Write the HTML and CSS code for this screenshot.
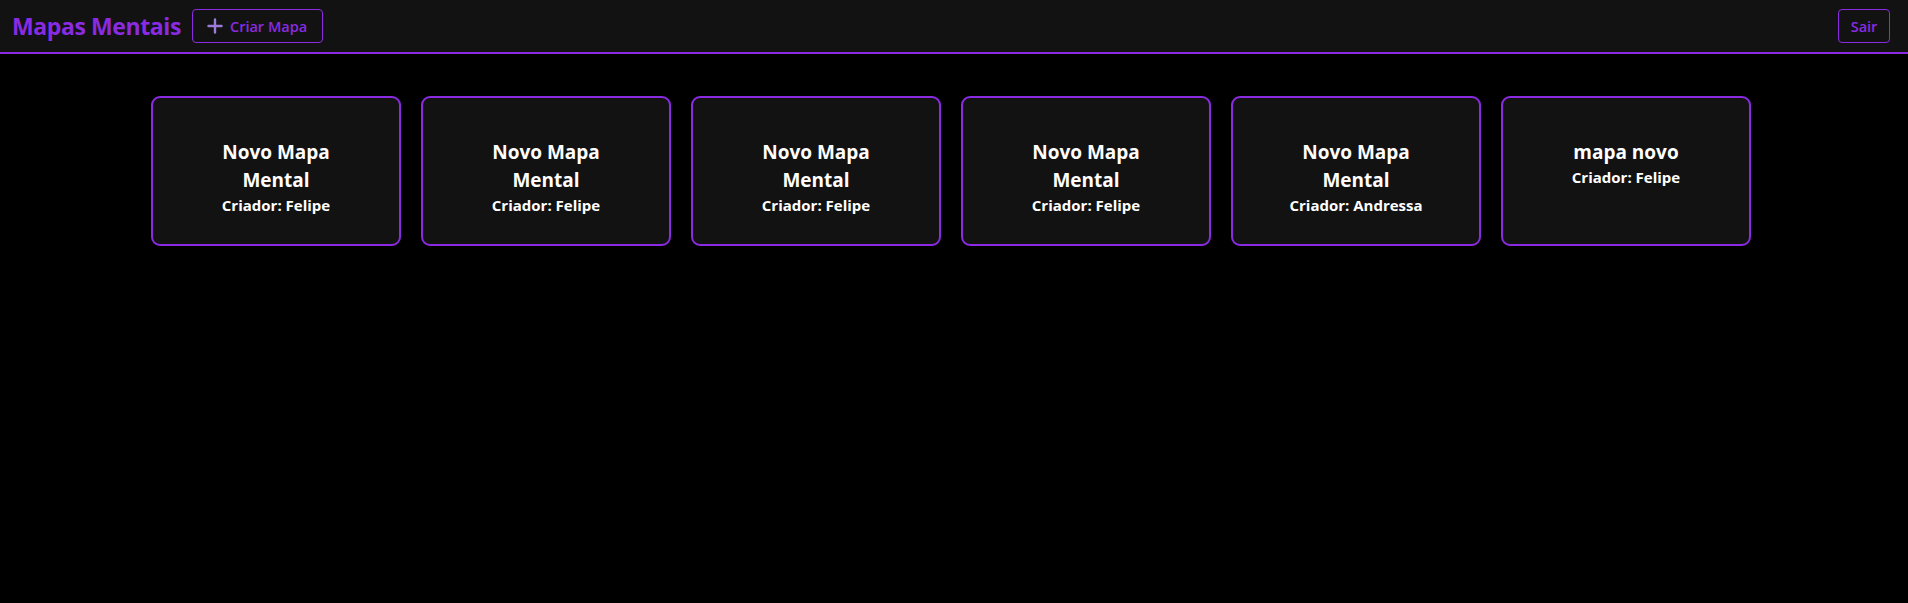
FILE: index.html
```html
<!DOCTYPE html>
<html lang="pt-BR">
<head>
<meta charset="utf-8">
<title>Mapas Mentais</title>
<link rel="stylesheet" href="styles.css">
</head>
<body>
<header class="topbar">
  <div class="topbar-left">
    <h1 class="brand">Mapas Mentais</h1>
    <button class="btn btn-create">
      <svg class="plus" viewBox="0 0 16 16" width="16" height="16" aria-hidden="true"><path d="M8 1.5v13M1.5 8h13" stroke="currentColor" stroke-width="2.4" stroke-linecap="round"/></svg>
      <span>Criar Mapa</span>
    </button>
  </div>
  <button class="btn btn-logout">Sair</button>
</header>
<main class="maps">
  <div class="card"><h3 class="card-title">Novo Mapa Mental</h3><p class="card-owner">Criador: Felipe</p></div>
  <div class="card"><h3 class="card-title">Novo Mapa Mental</h3><p class="card-owner">Criador: Felipe</p></div>
  <div class="card"><h3 class="card-title">Novo Mapa Mental</h3><p class="card-owner">Criador: Felipe</p></div>
  <div class="card"><h3 class="card-title">Novo Mapa Mental</h3><p class="card-owner">Criador: Felipe</p></div>
  <div class="card"><h3 class="card-title">Novo Mapa Mental</h3><p class="card-owner">Criador: Andressa</p></div>
  <div class="card"><h3 class="card-title">mapa novo</h3><p class="card-owner">Criador: Felipe</p></div>
</main>
</body>
</html>
```
FILE: styles.css
```css
* { box-sizing: border-box; }
html, body { margin: 0; padding: 0; background: #000; }
body {
  font-family: "Open Sans", "Noto Sans", sans-serif;
  color: #fff;
  min-height: 100vh;
}
.topbar {
  height: 54px;
  background: #121212;
  border-bottom: 2px solid #8a2be2;
  display: flex;
  align-items: center;
  justify-content: space-between;
  padding: 0 18px 0 12px;
}
.topbar-left {
  display: flex;
  align-items: center;
  gap: 11px;
}
.brand {
  margin: 0;
  font-size: 23px;
  font-weight: 700;
  color: #8a2be2;
  letter-spacing: -0.4px;
}
.btn {
  height: 34px;
  background: transparent;
  border: 1px solid #8a2be2;
  border-radius: 4px;
  color: #8a2be2;
  font-family: inherit;
  font-weight: 600;
  font-size: 14.5px;
  display: flex;
  align-items: center;
  cursor: pointer;
}
.btn-create {
  width: 131px;
  padding: 0 0 0 14px;
  gap: 7px;
}
.plus { color: #9b7ad8; width: 16px; height: 16px; }
.btn-logout {
  width: 52px;
  justify-content: center;
  padding: 0;
}
.maps {
  display: flex;
  justify-content: center;
  gap: 20px;
  padding: 42px 6px 0 0;
}
.card {
  width: 250px;
  min-height: 150px;
  background: #121212;
  border: 2px solid #8a2be2;
  border-radius: 9px;
  padding: 40px 40px 26px;
  text-align: center;
}
.card-title {
  margin: 0;
  font-size: 19px;
  font-weight: 700;
  line-height: 28px;
}
.card-owner {
  margin: 0;
  font-size: 15px;
  font-weight: 700;
  line-height: 23.4px;
}
```
